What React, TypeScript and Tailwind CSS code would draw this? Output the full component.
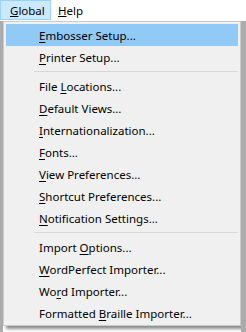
import React from 'react'

type Item = { pre: string; key: string; post: string; active?: boolean } | 'sep'

const items: Item[] = [
  { pre: '', key: 'E', post: 'mbosser Setup...', active: true },
  { pre: '', key: 'P', post: 'rinter Setup...' },
  'sep',
  { pre: 'File ', key: 'L', post: 'ocations...' },
  { pre: '', key: 'D', post: 'efault Views...' },
  { pre: '', key: 'I', post: 'nternationalization...' },
  { pre: '', key: 'F', post: 'onts...' },
  { pre: '', key: 'V', post: 'iew Preferences...' },
  { pre: '', key: 'S', post: 'hortcut Preferences...' },
  { pre: '', key: 'N', post: 'otification Settings...' },
  'sep',
  { pre: 'Import ', key: 'O', post: 'ptions...' },
  { pre: '', key: 'W', post: 'ordPerfect Importer...' },
  { pre: 'Wo', key: 'r', post: 'd Importer...' },
  { pre: 'Formatted ', key: 'B', post: 'raille Importer...' },
]

function App() {
  return (
    <div
      className="w-[246px] h-[332px] bg-white overflow-hidden text-[11.5px] text-black leading-none"
      style={{ fontFamily: '"Noto Sans", sans-serif' }}
    >
      <div className="flex h-[21px] items-stretch">
        <div className="w-[51px] h-[20px] bg-[#cce8ff] border border-[#99d1ff] flex items-center pl-[9px] pt-[1px]">
          <span><u>G</u>lobal</span>
        </div>
        <div className="flex items-center pl-[7px] h-[20px] pt-[1px]">
          <span><u>H</u>elp</span>
        </div>
      </div>
      <div className="flex h-[311px]">
        <div className="w-[3px] bg-[#ababab]" />
        <div className="w-[238px] h-[305px] bg-[#f0f0f0] border border-[#cccccc] pt-[2px] pb-[1px] px-[2px] shadow-[3px_3px_3px_rgba(0,0,0,0.45)]">
          {items.map((it, i) =>
            it === 'sep' ? (
              <div key={i} className="h-[7px] flex items-center pl-[28px]">
                <div className="h-px w-full bg-[#d7d7d7]" />
              </div>
            ) : (
              <div
                key={i}
                className={
                  'h-[22px] flex items-center pl-[33px] pt-[1px] ' +
                  (it.active ? 'bg-[#91c9f7]' : '')
                }
              >
                <span>
                  {it.pre}
                  <u className="underline-offset-2">{it.key}</u>
                  {it.post}
                </span>
              </div>
            )
          )}
        </div>
        <div className="flex-1 bg-[#ababab]" />
      </div>
    </div>
  )
}

export default App
